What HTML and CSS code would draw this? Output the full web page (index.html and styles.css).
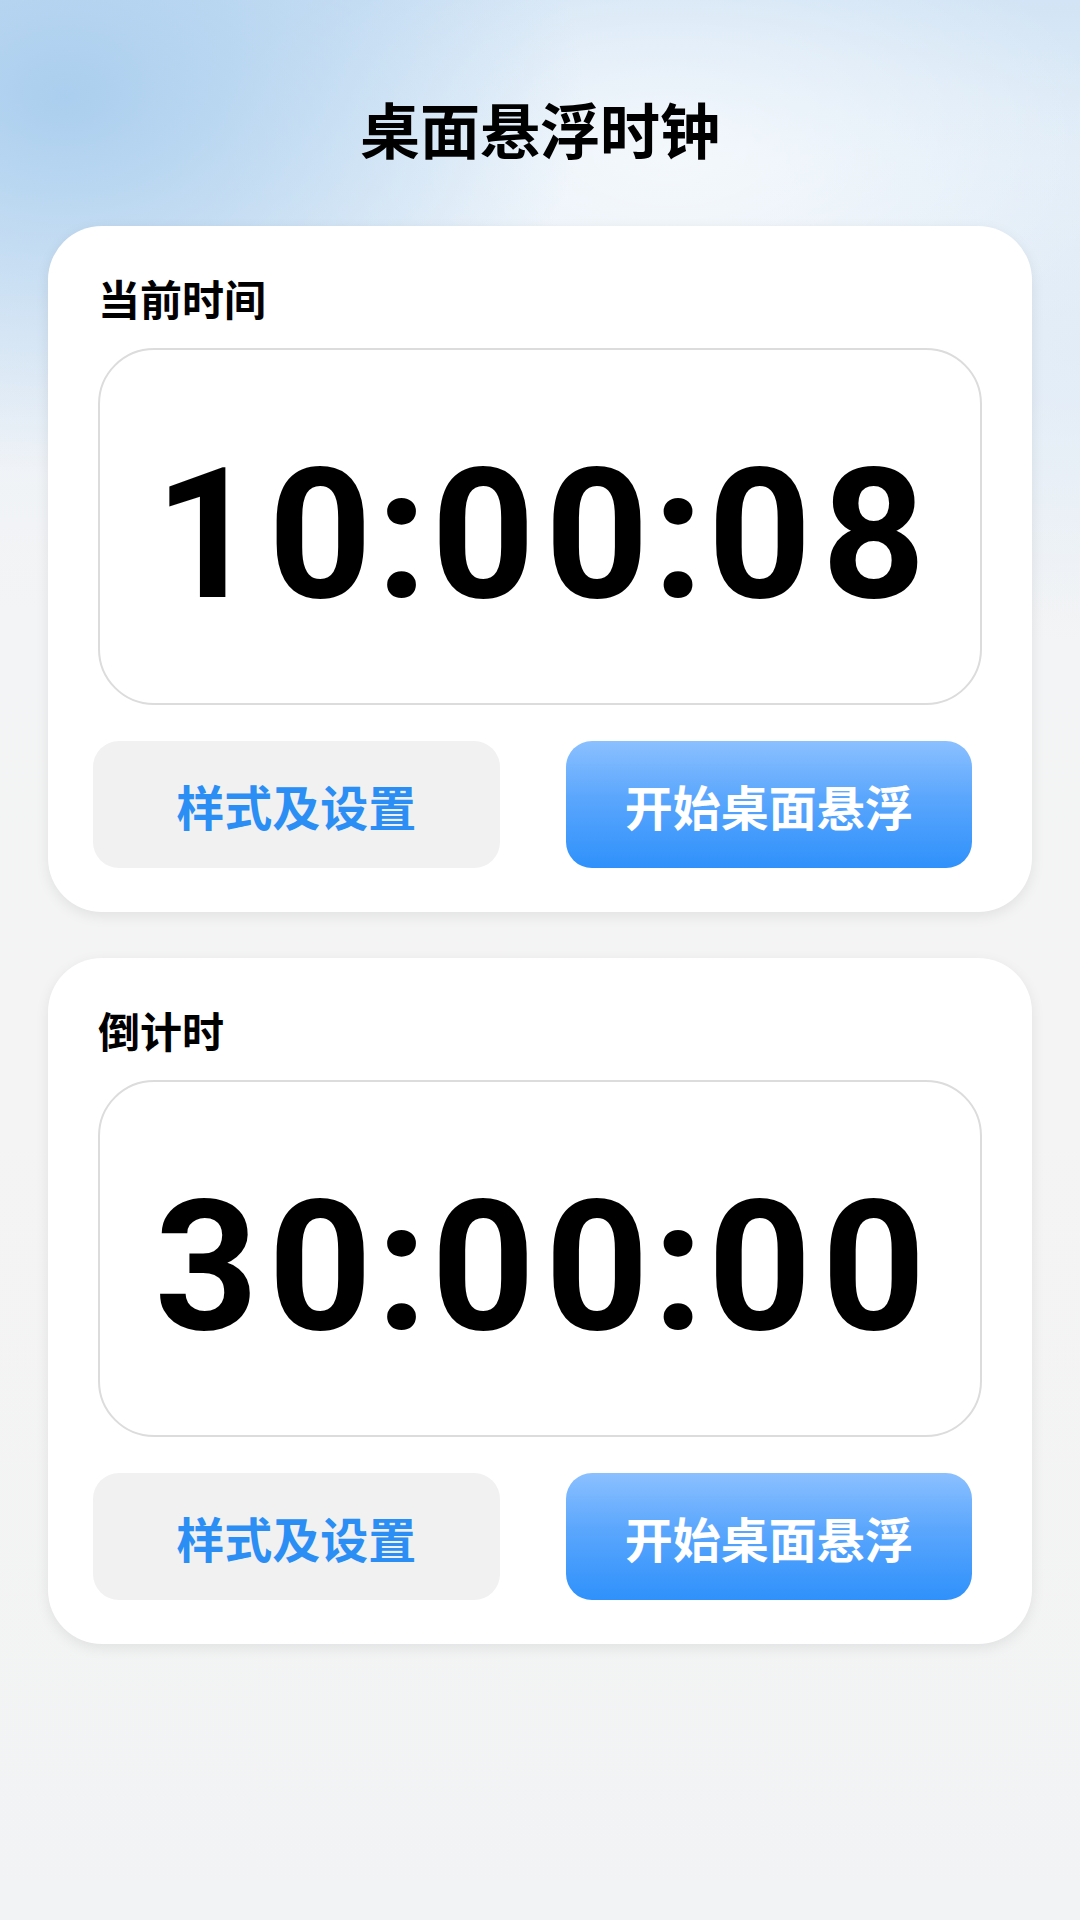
FILE: index.html
```html
<!DOCTYPE html>
<html lang="zh-CN">
<head>
<meta charset="utf-8">
<title>桌面悬浮时钟</title>
<link rel="stylesheet" href="styles.css">
</head>
<body>
<div class="page">
  <h1 class="title">桌面悬浮时钟</h1>

  <section class="card">
    <div class="label">当前时间</div>
    <div class="clock-box">
      <div class="digits">10<span class="sep">:</span>00<span class="sep">:</span>08</div>
    </div>
    <div class="actions">
      <button class="btn btn-light">样式及设置</button>
      <button class="btn btn-blue">开始桌面悬浮</button>
    </div>
  </section>

  <section class="card">
    <div class="label">倒计时</div>
    <div class="clock-box">
      <div class="digits">30<span class="sep">:</span>00<span class="sep">:</span>00</div>
    </div>
    <div class="actions">
      <button class="btn btn-light">样式及设置</button>
      <button class="btn btn-blue">开始桌面悬浮</button>
    </div>
  </section>
</div>
</body>
</html>
```
FILE: styles.css
```css
* { box-sizing: border-box; }

html, body {
  margin: 0;
  padding: 0;
}

body {
  width: 1080px;
  min-height: 1920px;
  font-family: "Noto Sans CJK SC", "Noto Sans", sans-serif;
  background-color: #f3f4f5;
  background-image:
    radial-gradient(ellipse 520px 380px at 6% 5%, rgba(168, 205, 238, 0.95) 0%, rgba(168, 205, 238, 0) 100%),
    radial-gradient(ellipse 460px 240px at 62% 8%, rgba(255, 255, 255, 0.6) 0%, rgba(255, 255, 255, 0) 100%),
    radial-gradient(ellipse 380px 300px at 100% 18%, rgba(220, 234, 247, 0.7) 0%, rgba(220, 234, 247, 0) 100%),
    linear-gradient(180deg, #d2e4f5 0px, #e3eef8 160px, #edf2f8 330px, #f3f4f5 620px, #f4f4f4 1100px, #f2f3f4 1920px);
}

.page {
  display: flex;
  flex-direction: column;
  padding: 98px 48px 0;
}

.title {
  margin: 0 0 68px;
  text-align: center;
  font-size: 60px;
  line-height: 60px;
  font-weight: 700;
  color: #000;
}

.card {
  background: #fff;
  border-radius: 54px;
  padding: 51px 50px 44px;
  box-shadow: 0 4px 14px rgba(0, 0, 0, 0.08);
  margin-bottom: 46px;
}

.label {
  font-size: 42px;
  line-height: 42px;
  font-weight: 700;
  color: #000;
  margin-bottom: 29px;
}

.clock-box {
  height: 357px;
  border: 2px solid #dcdcdc;
  border-radius: 56px;
  display: flex;
  align-items: center;
  justify-content: center;
  padding-top: 18px;
  padding-left: 10px;
}

.digits {
  font-family: Roboto, "Liberation Sans", sans-serif;
  font-weight: 700;
  font-size: 181px;
  line-height: 1;
  letter-spacing: 10px;
  color: #000;
}

.sep {
  margin: 0 -6px;
}

.actions {
  display: grid;
  grid-template-columns: 1fr 1fr;
  column-gap: 66px;
  margin: 36px 10px 0 -5px;
}

.btn {
  height: 127px;
  border: none;
  border-radius: 26px;
  font-family: "Noto Sans CJK SC", "Noto Sans", sans-serif;
  font-size: 48px;
  font-weight: 700;
  display: flex;
  align-items: center;
  justify-content: center;
  padding: 0;
}

.btn-light {
  background: #f1f1f1;
  color: #2b8ef5;
}

.btn-blue {
  background: linear-gradient(180deg, #8bc0ff 0%, #5aa6fd 45%, #2f91fb 100%);
  color: #fff;
}
```
